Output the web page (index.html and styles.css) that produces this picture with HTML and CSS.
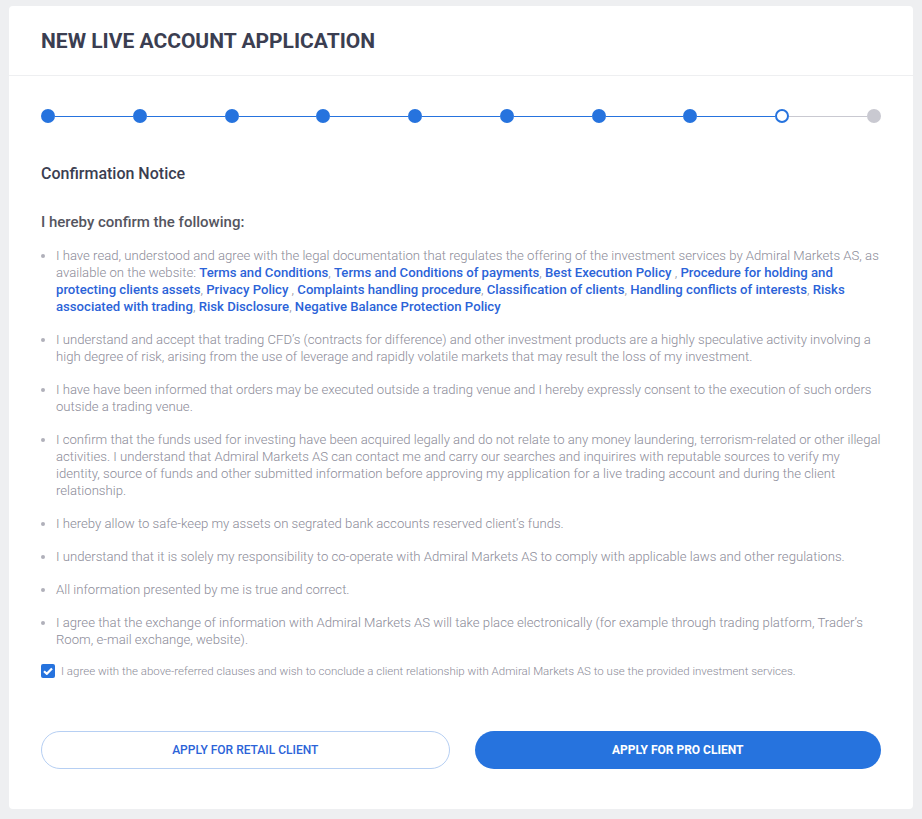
FILE: index.html
```html
<!DOCTYPE html>
<html lang="en">

<head>
    <meta charset="utf-8">
    <meta name="viewport" content="width=device-width, initial-scale=1.0">
    <title>New live account application</title>
    <link rel="stylesheet" href="styles.css">
</head>

<body>
    <main class="card">
        <header class="card-head">
            <h1>NEW LIVE ACCOUNT APPLICATION</h1>
        </header>

        <section class="card-body">
            <div class="stepper">
                <span class="dot done"></span><span class="line done"></span>
                <span class="dot done"></span><span class="line done"></span>
                <span class="dot done"></span><span class="line done"></span>
                <span class="dot done"></span><span class="line done"></span>
                <span class="dot done"></span><span class="line done"></span>
                <span class="dot done"></span><span class="line done"></span>
                <span class="dot done"></span><span class="line done"></span>
                <span class="dot done"></span><span class="line done"></span>
                <span class="dot current"></span><span class="line"></span>
                <span class="dot"></span>
            </div>

            <h2>Confirmation Notice</h2>
            <h3>I hereby confirm the following:</h3>

            <ul class="terms">
                <li>I have read, understood and agree with the legal documentation that regulates the offering of the investment services by Admiral Markets AS, as available on the website: <a href="#">Terms and Conditions</a>, <a href="#">Terms and Conditions of payments</a>, <a href="#">Best Execution Policy</a> , <a href="#">Procedure for holding and protecting clients assets</a>, <a href="#">Privacy Policy</a> , <a href="#">Complaints handling procedure</a>, <a href="#">Classification of clients</a>, <a href="#">Handling conflicts of interests</a>, <a href="#">Risks associated with trading</a>, <a href="#">Risk Disclosure</a>, <a href="#">Negative Balance Protection Policy</a></li>
                <li>I understand and accept that trading CFD’s (contracts for difference) and other investment products are a highly speculative activity involving a high degree of risk, arising from the use of leverage and rapidly volatile markets that may result the loss of my investment.</li>
                <li>I have have been informed that orders may be executed outside a trading venue and I hereby expressly consent to the execution of such orders outside a trading venue.</li>
                <li>I confirm that the funds used for investing have been acquired legally and do not relate to any money laundering, terrorism-related or other illegal activities. I understand that Admiral Markets AS can contact me and carry our searches and inquirires with reputable sources to verify my identity, source of funds and other submitted information before approving my application for a live trading account and during the client relationship.</li>
                <li>I hereby allow to safe-keep my assets on segrated bank accounts reserved client’s funds.</li>
                <li>I understand that it is solely my responsibility to co-operate with Admiral Markets AS to comply with applicable laws and other regulations.</li>
                <li>All information presented by me is true and correct.</li>
                <li>I agree that the exchange of information with Admiral Markets AS will take place electronically (for example through trading platform, Trader’s Room, e-mail exchange, website).</li>
            </ul>

            <label class="agree">
                <span class="box">
                    <svg width="10" height="8" viewBox="0 0 10 8"><path d="M1 4.2 L3.8 6.8 L9 1.4" fill="none" stroke="#fff" stroke-width="2.2"/></svg>
                </span>
                I agree with the above-referred clauses and wish to conclude a client relationship with Admiral Markets AS to use the provided investment services.
            </label>

            <div class="actions">
                <button class="btn btn-outline">APPLY FOR RETAIL CLIENT</button>
                <button class="btn btn-solid">APPLY FOR PRO CLIENT</button>
            </div>
        </section>
    </main>
</body>
</html>
```

FILE: styles.css
```css
body {
    margin: 0;
    background: #eeeff1;
    font-family: Roboto, "Liberation Sans", sans-serif;
    padding: 6px 9px 10px;
}

.card {
    background: #fff;
    border-radius: 4px;
}

.card-head {
    border-bottom: 1px solid #eeeff1;
    padding: 0 32px;
    height: 69px;
    display: flex;
    align-items: center;
}

.card-head h1 {
    margin: 0;
    font-size: 21px;
    font-weight: 700;
    color: #3b3e51;
    padding-top: 1px;
}

.card-body {
    padding: 32px 32px 40px;
}

/* stepper */
.stepper {
    display: flex;
    align-items: center;
    height: 16px;
}

.dot {
    width: 14px;
    height: 14px;
    border-radius: 50%;
    background: #c9c9d1;
    box-sizing: border-box;
    flex: none;
}

.dot.done {
    background: #2673de;
}

.dot.current {
    background: #fff;
    border: 2px solid #2673de;
}

.line {
    flex: 1;
    height: 1px;
    background: #c9c9d1;
}

.line.done {
    background: #2673de;
}

h2 {
    margin: 40px 0 0;
    font-size: 16px;
    font-weight: 500;
    color: #3b3e51;
}

h3 {
    margin: 30px 0 0;
    font-size: 15px;
    font-weight: 500;
    color: #555560;
}

.terms {
    margin: 16px 0 0;
    padding-left: 15px;
    font-size: 13.15px;
    line-height: 17px;
    font-weight: 300;
    color: #8b8b98;
}

.terms li {
    margin-bottom: 16px;
}

.terms li::marker {
    color: #b0b0ba;
    font-size: 13px;
}

.terms a {
    color: #2b63d8;
    font-weight: 500;
    text-decoration: none;
}

.agree {
    display: flex;
    align-items: center;
    gap: 6px;
    margin-top: 7px;
    font-size: 11.5px;
    font-weight: 300;
    color: #8b8b98;
}

.box {
    width: 14px;
    height: 14px;
    border-radius: 2px;
    background: #2673de;
    display: flex;
    align-items: center;
    justify-content: center;
    flex: none;
}

.actions {
    display: flex;
    gap: 25px;
    margin-top: 53px;
}

.btn {
    flex: 1;
    height: 38px;
    border-radius: 19px;
    font-family: Roboto, sans-serif;
    font-size: 12px;
    font-weight: 500;
    box-sizing: border-box;
    cursor: pointer;
}

.btn-outline {
    background: #fff;
    border: 1px solid #b6cff3;
    color: #2b63d8;
}

.btn-solid {
    background: #2673de;
    border: none;
    color: #fff;
    font-weight: 700;
}
```
